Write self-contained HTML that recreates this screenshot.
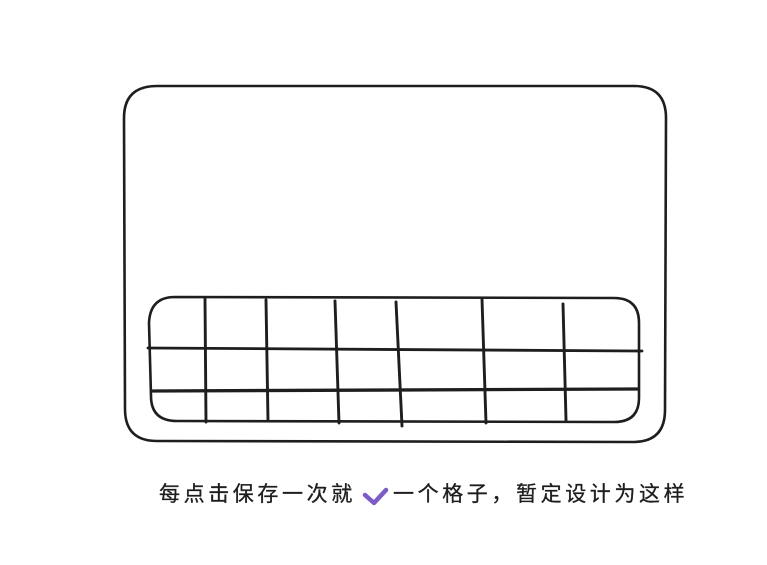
<!DOCTYPE html>
<html><head><meta charset="utf-8"><style>
html,body{margin:0;padding:0;background:#fff;width:767px;height:565px;overflow:hidden;position:relative}
.t{position:absolute;top:481px;font-family:"Liberation Sans","Noto Sans CJK SC",sans-serif;font-size:21px;color:#1e1e1e;letter-spacing:3.6px;white-space:nowrap;line-height:28px;-webkit-text-stroke:0.3px #1e1e1e}
</style></head><body>
<svg width="767" height="565" style="position:absolute;left:0;top:0" fill="none" stroke="#1e1e1e" stroke-linecap="round">
<path d="M157 86 L634 86 Q666 86 666 118 L665 410 Q665 442 633 442 L157 441 Q125 441 125 409 L124 118 Q124 86 157 86 Z" stroke-width="2.6"/>
<path d="M175 297 L614 298 Q639 298 639 323 L639 398 Q639 422 614 422 L177 421 Q151 421 151 396 L149 323 Q150 297 175 297 Z" stroke-width="2.6"/>
<path d="M148 348 L642 351" stroke-width="2.8"/>
<path d="M153 391 L638 389" stroke-width="3.3"/>
<path d="M205 299 L206 422" stroke-width="2.9"/>
<path d="M266 300 L268 421" stroke-width="2.9"/>
<path d="M335 301 L339 423" stroke-width="2.9"/>
<path d="M396 302 L402 426" stroke-width="2.9"/>
<path d="M482 299 L486 423" stroke-width="2.9"/>
<path d="M563 304 L566 420" stroke-width="2.9"/>
<path d="M365 495 L374 503 L386 490" stroke="#7b5cc6" stroke-width="4.5" stroke-linejoin="round"/>
</svg>
<div class="t" style="left:159px">每点击保存一次就</div>
<div class="t" style="left:393px">一个格子，暂定设计为这样</div>
</body></html>
